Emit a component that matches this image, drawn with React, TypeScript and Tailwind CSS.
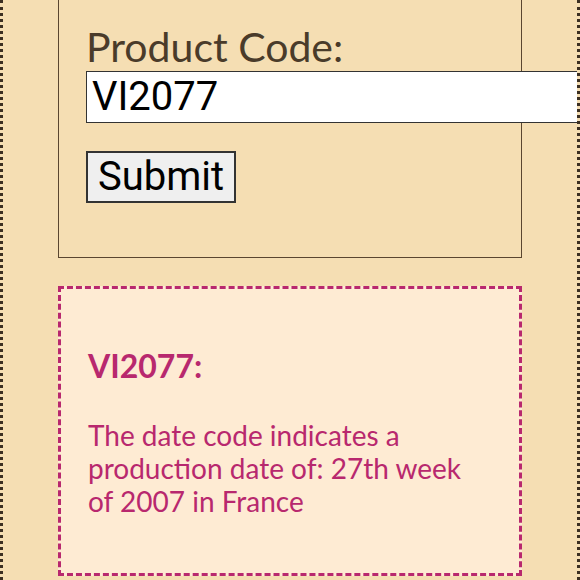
import React from "react";

const PINK = "text-[#b8286e]";

export default function App() {
  return (
    <div className="h-[580px] w-[580px] overflow-hidden bg-[#f5deb3] border-x-[3px] border-dotted border-[#3b2f22] px-[55px]">
      <form
        className="border border-t-0 border-[#5a4630] pl-[27px] pt-[22px] pb-[54px]"
        onSubmit={e => e.preventDefault()}
      >
        <label className="block text-[41px] leading-[49px] text-[#4a3b2a] [font-family:Lato,sans-serif]">
          Product Code:
        </label>
        <input
          type="text"
          defaultValue="VI2077"
          className="block w-[520px] h-[52px] bg-white border border-[#333] px-[5px] text-[40px] text-black [font-family:Roboto,sans-serif] outline-none"
        />
        <button
          type="submit"
          className="mt-[28px] block h-[52px] w-[150px] bg-[#efefef] border-2 border-[#333] text-[40px] leading-none text-black [font-family:Roboto,sans-serif]"
        >
          Submit
        </button>
      </form>

      <div className="mt-[28px] border-[3px] border-dashed border-[#b8286e] bg-[#feebd3] pl-[27px] pr-[40px] pt-[58px] pb-[55px] [font-family:Lato,sans-serif]">
        <h2 className={`text-[32px] leading-[1.2] font-bold ${PINK}`}>VI2077:</h2>
        <p className={`mt-[34px] text-[28px] leading-[33px] ${PINK}`}>
          The date code indicates a production date of: 27th week of 2007 in France
        </p>
      </div>
    </div>
  );
}
